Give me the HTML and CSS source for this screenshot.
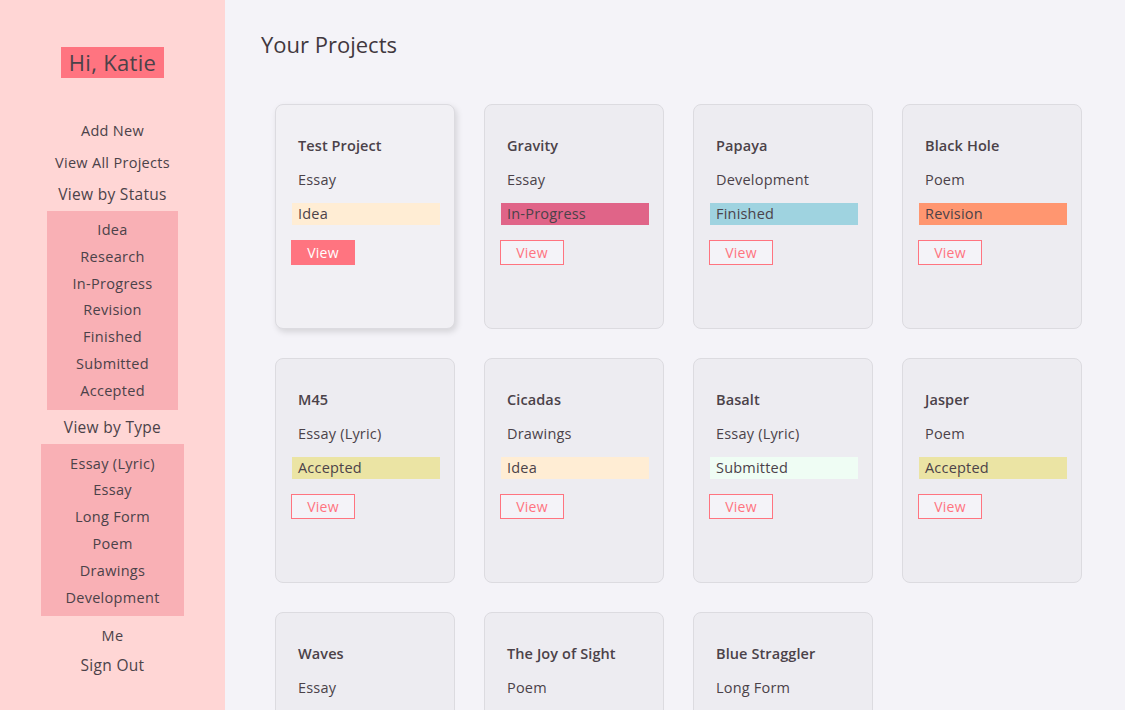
FILE: index.html
```html
<!DOCTYPE html>
<html lang="en">
<head>
<meta charset="utf-8">
<title>Your Projects</title>
<link rel="stylesheet" href="styles.css">
</head>
<body>
<div class="app">
  <aside class="sidebar">
    <div class="greeting">Hi, Katie</div>
    <nav class="nav">
      <a class="nav-link">Add New</a>
      <a class="nav-link tight">View All Projects</a>
      <a class="nav-link big">View by Status</a>
      <div class="sub">
        <a>Idea</a>
        <a>Research</a>
        <a>In-Progress</a>
        <a>Revision</a>
        <a>Finished</a>
        <a>Submitted</a>
        <a>Accepted</a>
      </div>
      <a class="nav-link big">View by Type</a>
      <div class="sub wide">
        <a>Essay (Lyric)</a>
        <a>Essay</a>
        <a>Long Form</a>
        <a>Poem</a>
        <a>Drawings</a>
        <a>Development</a>
      </div>
      <a class="nav-link me">Me</a>
      <a class="nav-link big">Sign Out</a>
    </nav>
  </aside>
  <main class="main">
    <h1 class="title">Your Projects</h1>
    <div class="grid">
      <div class="card active">
        <div class="card-title">Test Project</div>
        <div class="card-type">Essay</div>
        <div class="status idea">Idea</div>
        <a class="btn filled">View</a>
      </div>
      <div class="card">
        <div class="card-title">Gravity</div>
        <div class="card-type">Essay</div>
        <div class="status progress">In-Progress</div>
        <a class="btn">View</a>
      </div>
      <div class="card">
        <div class="card-title">Papaya</div>
        <div class="card-type">Development</div>
        <div class="status finished">Finished</div>
        <a class="btn">View</a>
      </div>
      <div class="card">
        <div class="card-title">Black Hole</div>
        <div class="card-type">Poem</div>
        <div class="status revision">Revision</div>
        <a class="btn">View</a>
      </div>
      <div class="card">
        <div class="card-title">M45</div>
        <div class="card-type">Essay (Lyric)</div>
        <div class="status accepted">Accepted</div>
        <a class="btn">View</a>
      </div>
      <div class="card">
        <div class="card-title">Cicadas</div>
        <div class="card-type">Drawings</div>
        <div class="status idea">Idea</div>
        <a class="btn">View</a>
      </div>
      <div class="card">
        <div class="card-title">Basalt</div>
        <div class="card-type">Essay (Lyric)</div>
        <div class="status submitted">Submitted</div>
        <a class="btn">View</a>
      </div>
      <div class="card">
        <div class="card-title">Jasper</div>
        <div class="card-type">Poem</div>
        <div class="status accepted">Accepted</div>
        <a class="btn">View</a>
      </div>
      <div class="card">
        <div class="card-title">Waves</div>
        <div class="card-type">Essay</div>
        <div class="status progress">In-Progress</div>
        <a class="btn">View</a>
      </div>
      <div class="card">
        <div class="card-title">The Joy of Sight</div>
        <div class="card-type">Poem</div>
        <div class="status idea">Idea</div>
        <a class="btn">View</a>
      </div>
      <div class="card">
        <div class="card-title">Blue Straggler</div>
        <div class="card-type">Long Form</div>
        <div class="status idea">Idea</div>
        <a class="btn">View</a>
      </div>
    </div>
  </main>
</div>
</body>
</html>
```

FILE: styles.css
```css
* { box-sizing: border-box; }
html, body { margin: 0; padding: 0; }
body {
  font-family: "Open Sans", "Liberation Sans", sans-serif;
  color: #4b4249;
  background: #f4f3f8;
}
.app {
  display: flex;
  min-height: 100vh;
}
.sidebar {
  width: 225px;
  flex-shrink: 0;
  background: #ffd6d5;
  display: flex;
  flex-direction: column;
  align-items: center;
  padding-top: 47px;
}
.greeting {
  background: #ff7480;
  font-size: 22px;
  line-height: 31px;
  padding: 0 8px;
  letter-spacing: 0.3px;
}
.nav {
  display: flex;
  flex-direction: column;
  align-items: center;
  margin-top: 43px;
}
.nav a {
  display: block;
  text-align: center;
  cursor: pointer;
  letter-spacing: 0.3px;
}
.nav-link {
  font-size: 14.5px;
  line-height: 20px;
  margin-bottom: 12px;
}
.nav-link.tight { margin-bottom: 10px; }
.nav-link.big {
  font-size: 15.5px;
  line-height: 22px;
  margin-bottom: 6px;
}
.nav-link.me {
  margin-top: 3px;
  margin-bottom: 8px;
}
.sub {
  background: #f9b0b5;
  width: 131px;
  padding: 6px 0 5px;
  margin-bottom: 6px;
  display: flex;
  flex-direction: column;
}
.sub.wide { width: 143px; padding: 7px 0 5px; margin-bottom: 7px; }
.sub a {
  font-size: 14.5px;
  line-height: 26.8px;
}
.main {
  flex: 1;
  padding: 30px 0 40px 36px;
}
.title {
  margin: 0;
  font-size: 22px;
  font-weight: 500;
  line-height: 29px;
  color: #41383e;
}
.grid {
  display: grid;
  grid-template-columns: repeat(4, 180px);
  grid-auto-rows: 225px;
  gap: 29px;
  margin: 45px 0 0 14px;
}
.card {
  background: #edecf1;
  border: 1px solid #dcdbe0;
  border-radius: 8px;
  padding: 30px 15px 0 15px;
  display: flex;
  flex-direction: column;
  align-items: flex-start;
}
.card.active {
  background: #f1f0f4;
  box-shadow: 2px 3px 6px rgba(0, 0, 0, 0.13);
}
.card-title {
  font-size: 14.5px;
  font-weight: 600;
  line-height: 22px;
  padding-left: 7px;
  letter-spacing: 0.1px;
}
.card-type {
  font-size: 14.5px;
  line-height: 22px;
  padding-left: 7px;
  margin-top: 12px;
  letter-spacing: 0.2px;
}
.status {
  width: 148px;
  margin-left: 1px;
  height: 22px;
  line-height: 22px;
  font-size: 14.5px;
  padding-left: 6px;
  margin-top: 12px;
  letter-spacing: 0.2px;
}
.status.idea { background: #ffedd4; }
.status.progress { background: #e06488; }
.status.finished { background: #9fd3e0; }
.status.revision { background: #ff9670; }
.status.accepted { background: #ebe4a4; }
.status.submitted { background: #effdf4; }
.btn {
  margin-top: 15px;
  width: 64px;
  height: 25px;
  line-height: 23px;
  text-align: center;
  font-size: 14px;
  color: #ff7480;
  border: 1px solid #ff7480;
  background: #f4f3f8;
  cursor: pointer;
  letter-spacing: 0.2px;
}
.btn.filled {
  background: #ff7480;
  color: #fff;
}
```
